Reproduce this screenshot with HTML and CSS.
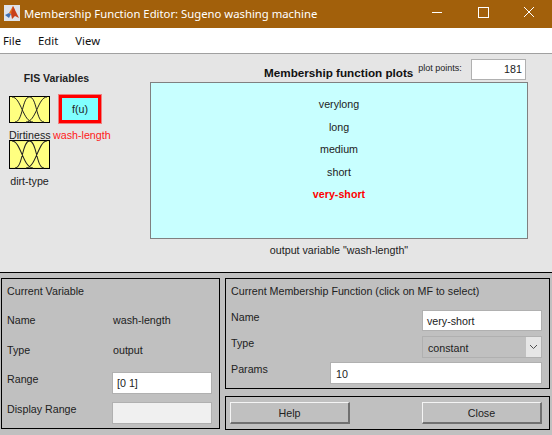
FILE: index.html
```html
<!doctype html>
<html lang="en">
<head>
    <meta charset="utf-8">
    <title>Membership Function Editor</title>
    <link rel="stylesheet" href="styles.css">
</head>
<body>
<div class="titlebar">
    <svg class="app-icon" viewBox="0 0 16 16">
        <rect x="0" y="0" width="16" height="16" fill="#dfe3ea"/>
        <path d="M1 10 L5 8 L7 9 L5 13 Z" fill="#3f6fb0"/>
        <path d="M5 8 L9 1 L11 5 L7 9 Z" fill="#e2701e"/>
        <path d="M9 1 L11 5 L15 13 L11 11 L8 14 L7 9 Z" fill="#c8401a"/>
    </svg>
    <span class="title">Membership Function Editor: Sugeno washing machine</span>
    <svg class="win-btn" viewBox="0 0 46 28">
        <path d="M18 12.5 H28" stroke="#fff" fill="none"/>
    </svg>
    <svg class="win-btn" viewBox="0 0 46 28">
        <rect x="18.5" y="7.5" width="10" height="10" stroke="#fff" fill="none"/>
    </svg>
    <svg class="win-btn" viewBox="0 0 46 28">
        <path d="M18 7 L28 17 M28 7 L18 17" stroke="#fff" fill="none"/>
    </svg>
</div>

<div class="menubar">
    <span>File</span>
    <span>Edit</span>
    <span>View</span>
</div>

<div class="top">
    <div class="fis">
        <div class="fis-title">FIS Variables</div>
        <div class="fis-grid">
            <div class="fis-item">
                <svg class="mf-icon" viewBox="0 0 41 27" preserveAspectRatio="none">
                    <rect x="0.5" y="0.5" width="40" height="26" fill="#ffff80" stroke="#000"/>
                    <path d="M3 1 C12 1 14 26 24 26 M6 26 C14 26 13 1 20.5 1 C28 1 27 26 35 26 M38 1 C29 1 27 26 17 26" fill="none" stroke="#222"/>
                </svg>
                <span class="fis-label">Dirtiness</span>
            </div>
            <div class="fis-item">
                <div class="fu-box">f(u)</div>
                <span class="fis-label red">wash-length</span>
            </div>
            <div class="fis-item">
                <svg class="mf-icon tall" viewBox="0 0 41 27" preserveAspectRatio="none">
                    <rect x="0.5" y="0.5" width="40" height="26" fill="#ffff80" stroke="#000"/>
                    <path d="M3 1 C12 1 14 26 24 26 M6 26 C14 26 13 1 20.5 1 C28 1 27 26 35 26 M38 1 C29 1 27 26 17 26" fill="none" stroke="#222"/>
                </svg>
                <span class="fis-label">dirt-type</span>
            </div>
        </div>
    </div>

    <div class="plot-col">
        <div class="plot-head">
            <span class="plot-title">Membership function plots</span>
            <span class="plot-points">plot points:</span>
            <span class="field points-field">181</span>
        </div>
        <div class="plot">
            <span>verylong</span>
            <span>long</span>
            <span>medium</span>
            <span>short</span>
            <span class="selected">very-short</span>
        </div>
        <div class="plot-caption">output variable "wash-length"</div>
    </div>
</div>

<div class="bottom">
    <div class="panel var-panel">
        <div class="panel-title">Current Variable</div>
        <div class="var-rows">
            <div class="var-row"><span>Name</span><span>wash-length</span></div>
            <div class="var-row"><span>Type</span><span>output</span></div>
            <div class="var-row has-field"><span>Range</span><span class="field var-field">[0 1]</span></div>
            <div class="var-row has-field"><span>Display Range</span><span class="field var-field disabled"></span></div>
        </div>
    </div>

    <div class="right-col">
        <div class="panel mf-panel">
            <div class="panel-title">Current Membership Function (click on MF to select)</div>
            <div class="mf-rows">
                <div class="mf-row">
                    <span class="mf-label">Name</span>
                    <span class="field mf-field">very-short</span>
                </div>
                <div class="mf-row">
                    <span class="mf-label">Type</span>
                    <span class="select mf-field">constant
                        <span class="select-arrow">
                            <svg width="9" height="6" viewBox="0 0 9 6"><path d="M1 1 L4.5 4.5 L8 1" fill="none" stroke="#505050"/></svg>
                        </span>
                    </span>
                </div>
                <div class="mf-row">
                    <span class="mf-label">Params</span>
                    <span class="field params-field">10</span>
                </div>
            </div>
        </div>
        <div class="panel btn-panel">
            <span class="btn">Help</span>
            <span class="btn">Close</span>
        </div>
    </div>
</div>
</body>
</html>
```

FILE: styles.css
```css
html, body {
    margin: 0;
    height: 100%;
}

body {
    width: 552px;
    height: 435px;
    overflow: hidden;
    display: flex;
    flex-direction: column;
    font-family: "Liberation Sans", Arial, sans-serif;
    font-size: 10.7px;
    color: #222;
    background: #c0c0c0;
}

.titlebar {
    height: 28px;
    flex: none;
    display: flex;
    align-items: center;
    background: #a2600b;
    color: #fff;
    font-family: "Noto Sans", sans-serif;
    font-size: 11.3px;
}

.app-icon {
    width: 16px;
    height: 16px;
    margin-left: 4px;
    margin-top: -2px;
}

.title {
    margin-left: 4px;
    flex: 1;
    margin-top: -2px;
}

.win-btn {
    width: 46px;
    height: 28px;
}

.menubar {
    height: 25px;
    flex: none;
    display: flex;
    align-items: center;
    gap: 17px;
    padding-left: 3px;
    background: #fff;
    border-bottom: 1px solid #a0a0a0;
    color: #111;
    font-family: "Noto Sans", sans-serif;
    font-size: 11.3px;
}

.top {
    height: 218px;
    flex: none;
    display: flex;
    background: #e5e5e5;
    border-bottom: 1px solid #000;
}

.fis {
    width: 150px;
    flex: none;
}

.fis-title {
    width: 113px;
    margin-top: 18px;
    text-align: center;
    font-weight: bold;
    font-size: 10.5px;
}

.fis-grid {
    display: grid;
    grid-template-columns: 50px 50px;
    grid-template-rows: 45px 45px;
    margin: 11px 0 0 9px;
}

.fis-item {
    display: flex;
    flex-direction: column;
    align-items: flex-start;
}

.mf-icon {
    width: 41px;
    height: 27px;
    margin-top: 1px;
    flex: none;
}

.mf-icon.tall {
    height: 29px;
    margin-top: 0;
}

.fis-label {
    width: 41px;
    margin-top: 6px;
    text-align: center;
    white-space: nowrap;
}

.red {
    color: #ff2020;
    text-align: left;
    margin-left: -6px;
}

.fu-box {
    width: 36px;
    height: 22px;
    border: 3px solid #f00;
    outline: 1px solid #f08080;
    line-height: 22px;
    text-align: center;
    background: #80ffff;
    flex: none;
}

.plot-col {
    width: 378px;
    flex: none;
    display: flex;
    flex-direction: column;
}

.plot-head {
    height: 28px;
    display: flex;
    align-items: flex-end;
}

.plot-title {
    margin-left: 114px;
    font-weight: bold;
    font-size: 11.7px;
    padding-bottom: 3px;
    color: #111;
}

.plot-points {
    margin-left: 5px;
    font-size: 9px;
    padding-bottom: 9px;
}

.field {
    box-sizing: border-box;
    display: block;
    background: #fff;
    border: 1px solid #b0b0b0;
    padding: 0 4px;
}

.points-field {
    width: 55px;
    height: 21px;
    line-height: 19px;
    margin: 0 0 2px 9px;
    padding-right: 3px;
    text-align: right;
}

.plot {
    box-sizing: border-box;
    height: 157px;
    padding-top: 15px;
    display: flex;
    flex-direction: column;
    align-items: center;
    gap: 9.6px;
    background: #c8ffff;
    border: 1px solid #808080;
    line-height: 13px;
}

.selected {
    color: #f00;
    font-weight: bold;
}

.plot-caption {
    margin-top: 5px;
    text-align: center;
}

.bottom {
    flex: 1;
    display: flex;
    gap: 5px;
    padding: 5px 0 0 1px;
}

.panel {
    box-sizing: border-box;
    border: 1px solid #000;
}

.var-panel {
    width: 219px;
    height: 151px;
    padding: 5px 5px 0;
}

.panel-title {
    height: 14px;
    line-height: 14px;
}

.var-rows {
    margin-top: 7px;
}

.var-row {
    height: 30px;
    display: flex;
    align-items: center;
}

.var-row > span:first-child {
    width: 106px;
}

.has-field > span:first-child {
    margin-bottom: 2px;
}

.var-field {
    width: 100px;
    height: 22px;
    line-height: 21px;
    margin: 6px 0 0 -1px;
}

.disabled {
    background: #f0f0f0;
}

.right-col {
    width: 325px;
    display: flex;
    flex-direction: column;
    gap: 7px;
}

.mf-panel {
    height: 111px;
    padding: 5px 7px 0 5px;
}

.mf-rows {
    margin-top: 12px;
}

.mf-row {
    height: 26px;
    display: flex;
    align-items: flex-start;
    justify-content: space-between;
}

.mf-label {
    line-height: 13px;
    padding-top: 1px;
}

.mf-field {
    box-sizing: border-box;
    width: 120px;
    height: 21px;
    line-height: 20px;
}

.select {
    height: 22px;
    line-height: 22px;
    display: flex;
    justify-content: space-between;
    background: #c0c0c0;
    border: 1px solid #b0b0b0;
    padding-left: 5px;
}

.select-arrow {
    width: 15px;
    display: flex;
    align-items: center;
    justify-content: center;
    background: #e6e6e6;
}

.params-field {
    width: 212px;
    height: 22px;
    line-height: 22px;
    padding-left: 5px;
}

.btn-panel {
    height: 34px;
    display: flex;
    justify-content: space-between;
    align-items: center;
    padding: 0 7px 0 4px;
}

.btn {
    box-sizing: border-box;
    width: 120px;
    height: 22px;
    line-height: 20px;
    text-align: center;
    background: #c0c0c0;
    border-style: solid;
    border-width: 1px 2px 2px 1px;
    border-color: #f4f4f4 #707070 #707070 #f4f4f4;
}
```
